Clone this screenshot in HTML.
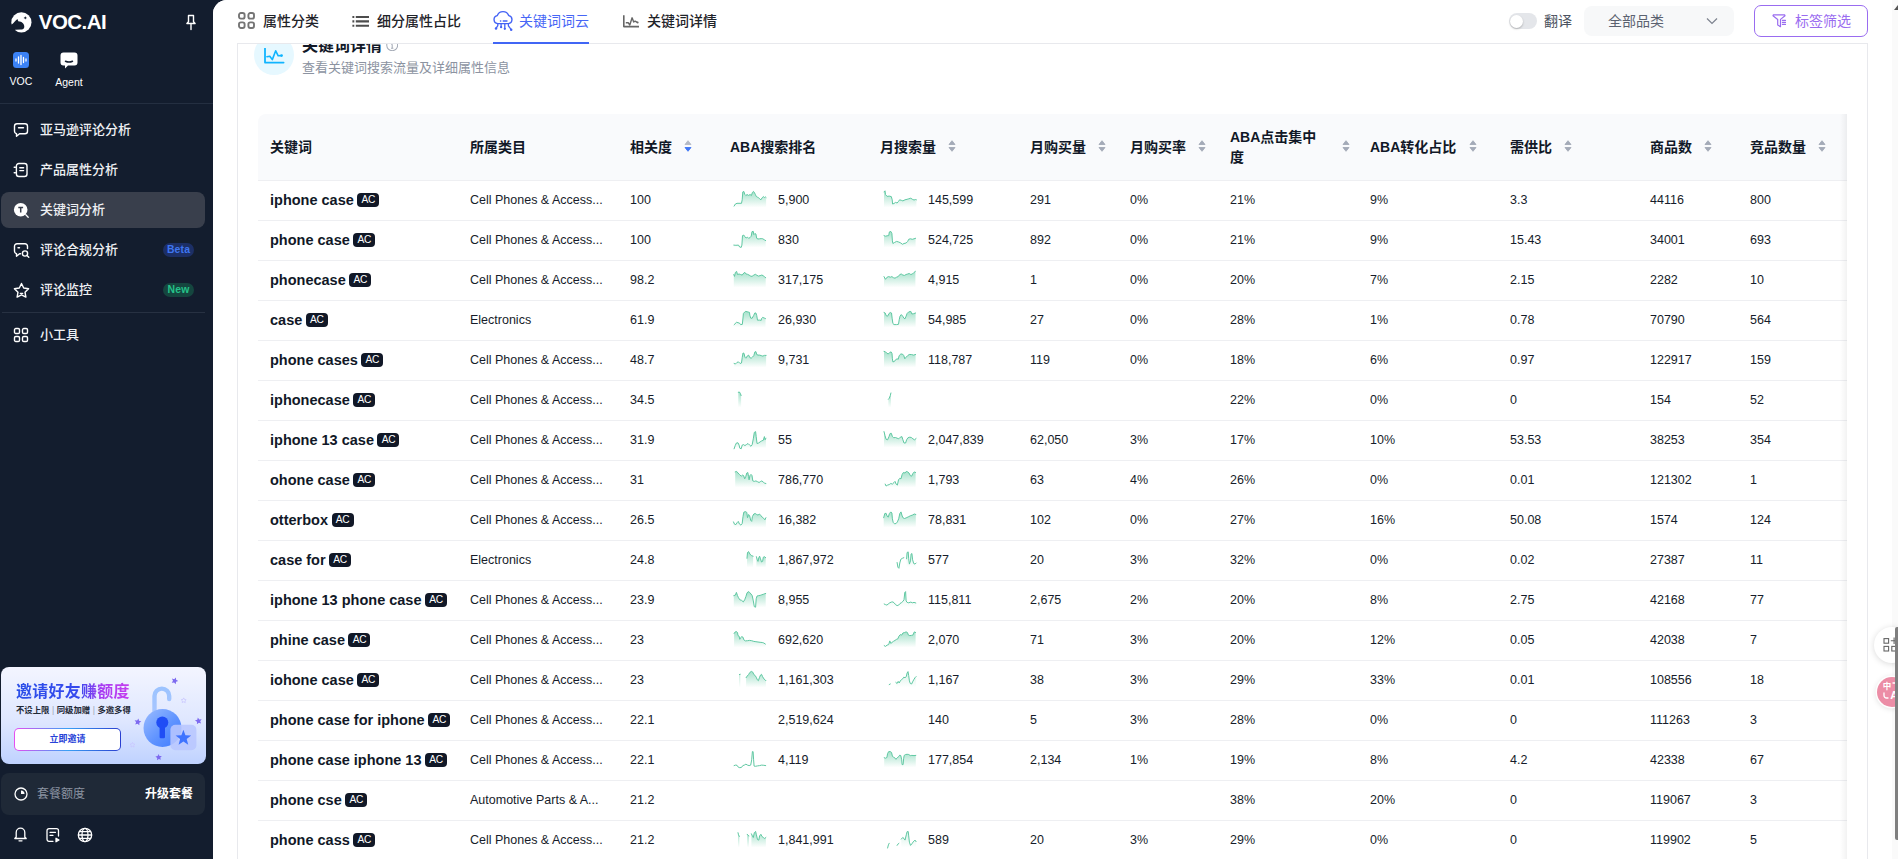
<!DOCTYPE html>
<html lang="zh-CN">
<head>
<meta charset="utf-8">
<title>VOC.AI - 关键词分析</title>
<style>
*{box-sizing:border-box;margin:0;padding:0}
html,body{width:1898px;height:859px;overflow:hidden;background:#131d2e}
body{font-family:"Liberation Sans","Noto Sans CJK SC",sans-serif;color:#1f2329;position:relative;font-size:12.5px}
svg{display:block}
/* ---------- sidebar ---------- */
#side{position:absolute;left:0;top:0;width:213px;height:859px;background:#131d2e;color:#fff}
#logo{position:absolute;left:10.8px;top:12px}
#brand{position:absolute;left:38.8px;top:10px;font-size:20.5px;font-weight:700;line-height:24px;letter-spacing:-.55px;color:#fff}
#pin{position:absolute;left:185px;top:14px}
.app{position:absolute;top:52px;text-align:center;font-size:10.5px;color:#fff;line-height:13px}
.app svg{margin:0 auto 7px}
#sdiv1{position:absolute;left:0;top:103px;width:213px;height:1px;background:#242f41}
.mi{position:absolute;left:1px;width:204px;height:36px;border-radius:8px;font-size:13px;font-weight:500;color:#eef0f3;line-height:36px;padding-left:39px;font-family:"Liberation Sans","Noto Sans CJK SC",sans-serif}
.mi svg{position:absolute;left:12px;top:10px}
.mi.on{background:#393f4c}
.tag{position:absolute;right:11px;top:11px;height:14px;width:31px;border-radius:7px;font-size:10.4px;line-height:14px;font-weight:700;text-align:center;padding:0;letter-spacing:.15px}
.tag.beta{background:#1c2f66;color:#3f76f0}
.tag.new{background:#15463f;color:#25c28a}
#sdiv2{position:absolute;left:2px;top:312px;width:203px;height:1px;background:#273142}
#promo{position:absolute;left:1px;top:667px;width:205px;height:97px;border-radius:8px;background:linear-gradient(180deg,#f3f5ff 0%,#dfe7ff 55%,#bfd2ff 100%);overflow:hidden}
#promo .t{position:absolute;left:15px;top:15px;font-size:16px;font-weight:700;line-height:20px;letter-spacing:.25px;background:linear-gradient(90deg,#2a4fe8 0%,#3549ee 55%,#a83df2 75%,#c63dee 100%);-webkit-background-clip:text;background-clip:text;color:transparent;white-space:nowrap}
#promo .s{position:absolute;left:15px;top:37px;font-size:8.4px;font-weight:700;line-height:12px;color:#1f2937;white-space:nowrap}
#promo .s em{font-style:normal;color:#9aa3b5;font-weight:400;padding:0 2.5px}
#promo .btn{position:absolute;left:13px;top:61px;width:107px;height:22.5px;border-radius:5px;background:linear-gradient(90deg,#e64df0,#3aa0f5 50%,#2a3fd0);padding:1px}
#promo .btn span{display:block;height:20.5px;border-radius:4px;background:#fff;color:#2743d8;font-size:9px;font-weight:700;line-height:20.5px;text-align:center}
#lock{position:absolute;left:127px;top:6px}
#quota{position:absolute;left:1px;top:773px;width:204px;height:42px;border-radius:8px;background:#1f2937}
#quota svg{position:absolute;left:13px;top:14px}
#quota .l{position:absolute;left:36px;top:13px;font-size:12px;line-height:16px;color:#8b93a1}
#quota .r{position:absolute;right:12px;top:13px;font-size:12px;line-height:16px;color:#fff;font-weight:700}
.bi{position:absolute;top:826px}
/* ---------- main ---------- */
#main{position:absolute;left:213px;top:0;width:1685px;height:859px;background:#fff;border-top-left-radius:14px;overflow:hidden}
#tabs{position:absolute;left:0;top:0;width:1679px;height:43px;background:#fff;z-index:5}
.tab{position:absolute;top:0;height:44px;font-size:14px;line-height:20px;color:#1f2329;white-space:nowrap;font-weight:500}
.tab svg{position:absolute;left:0;top:12px}
.tab span{position:absolute;top:11px}
.tab.on{color:#4766f6;font-weight:400}
.tab.on:after{content:"";position:absolute;left:0;right:0;top:42px;height:2px;background:#4166f5;z-index:6}
#sw{position:absolute;left:1295.5px;top:13px;width:28px;height:16px;border-radius:8px;background:#e4e6ea}
#sw:after{content:"";position:absolute;left:1.5px;top:1.5px;width:13px;height:13px;border-radius:7px;background:#fff;box-shadow:0 1px 2px rgba(0,0,0,.25)}
#swl{position:absolute;left:1331px;top:11px;font-size:14px;line-height:20px;color:#4b5260}
#sel{position:absolute;left:1371px;top:6px;width:150px;height:30px;border-radius:8px;background:#f7f8f9;font-size:14px;line-height:30px;color:#5b6270;padding-left:24px}
#sel svg{position:absolute;left:122px;top:11px}
#fbtn{position:absolute;left:1541px;top:5px;width:114px;height:32px;border:1px solid #9a6cf0;border-radius:7px;color:#9a6cf0;font-size:14px;line-height:30px;padding-left:40px;background:#fff}
#fbtn svg{position:absolute;left:17px;top:8px}
#card{position:absolute;left:24px;top:43px;width:1631px;height:900px;border:1px solid #e8e9ed;background:#fff;overflow:hidden}
#circ{position:absolute;left:16px;top:-9px;width:40px;height:40px;border-radius:20px;background:#e6f8ff}
#circ svg{position:absolute;left:10px;top:13px}
#ttl{position:absolute;left:64px;top:-8.8px;font-size:16px;font-weight:700;line-height:22px;color:#111827}
#info{position:absolute;left:147.8px;top:-5.3px}
#sub{position:absolute;left:64px;top:14.7px;font-size:13px;line-height:18px;color:#8c93a1}
/* table */
#tw{position:absolute;left:20px;top:70px;width:1589px;height:800px;overflow:hidden;border-top-left-radius:8px}
#tw:after{content:"";position:absolute;right:0;top:0;width:7px;height:100%;background:linear-gradient(90deg,rgba(0,0,0,0),rgba(0,0,0,.05));pointer-events:none}
table{border-collapse:collapse;table-layout:fixed;width:1600px}
th{height:66px;background:#f9fafc;text-align:left;padding:0 12px;font-size:14px;font-weight:700;color:#111827;border-bottom:1px solid #eeeff2;position:relative;line-height:20px;vertical-align:middle}
td{height:40px;padding:0 12px;border-bottom:1px solid #eeeff2;font-size:12.5px;color:#161c2a;white-space:nowrap;overflow:hidden;vertical-align:middle}
td.kw b{font-size:14.5px;font-weight:700;color:#111827;vertical-align:middle}
.ac{display:inline-block;font-style:normal;vertical-align:middle;margin-left:3.5px;width:22px;height:14px;border-radius:4px;background:#111827;color:#fff;font-size:10.2px;line-height:14px;text-align:center;letter-spacing:-.3px}
.spc .sp{display:inline-block;vertical-align:middle;width:40px;height:20px;margin:0 8px 0 0}
.spc span{vertical-align:middle}
.srt{position:absolute;top:26px;width:8px;height:12px}
.h2{display:inline-block;width:96px;vertical-align:middle;position:relative;top:.7px}
/* floating + scrollbar */
#sb{position:absolute;left:1679px;top:0;width:6px;height:859px;background:#fafafa}
#sbt{position:absolute;left:1682px;top:627px;width:3px;height:213px;border-radius:2px 0 0 2px;background:#7f7f7f;z-index:9}
.fl{position:absolute;left:1664px;width:30px;height:30px;border-radius:15px;background:#fff;box-shadow:0 1px 6px rgba(0,0,0,.15)}
.sp polyline{fill:none;stroke:#5fc8a2;stroke-width:1;stroke-linejoin:round;stroke-linecap:round}
</style>
</head>
<body>
<div id="side">
  <svg id="logo" width="22" height="22" viewBox="0 0 22 22"><circle cx="10.4" cy="10.4" r="10.1" fill="#fff"/><path d="M-1 12.7L0.7 12.5C2.5 11.6 4 8.4 6.4 6.9L7.3 9.3C8.5 9.7 9.5 9.5 10.4 9.9C12.6 11 13.6 13.5 13.2 15.5C12.9 17 11.5 17.5 10 17.6L4.3 17.7L2 19.5L-1 19.5Z" fill="#131d2e"/><path d="M14.3 4.2l.55 1.15 1.15.55-1.15.55-.55 1.15-.55-1.15-1.15-.55 1.15-.55z" fill="#131d2e"/></svg>
  <div id="brand">VOC.AI</div>
  <svg id="pin" width="12" height="17" viewBox="0 0 12 17"><path d="M3.5 1.5h5v6.2l1.6 1.8h-8.200l1.600-1.800z" fill="none" stroke="#fff" stroke-width="1.400" stroke-linejoin="round"/><path d="M6 9.500v6" stroke="#fff" stroke-width="1.400" stroke-linecap="round"/></svg>
  <div class="app" style="left:9px;width:24px"><svg width="16" height="16" viewBox="0 0 16 16"><rect width="16" height="16" rx="3.500" fill="#3b82f6"/><g stroke="#fff" stroke-width="1.300" stroke-linecap="round"><path d="M3 7v2M5.500 5v6M8 3.500v9M10.500 5.500v5M13 7v2"/></g></svg>VOC</div>
  <div class="app" style="left:53px;width:32px"><svg width="18" height="17" viewBox="0 0 18 17"><path d="M3.500 0.500h11a3 3 0 0 1 3 3v7a3 3 0 0 1-3 3H8l-3 3v-3H3.500a3 3 0 0 1-3-3v-7a3 3 0 0 1 3-3z" fill="#fff"/><path d="M5.500 9.200q3.500 1.600 7 0" stroke="#131d2e" stroke-width="1.500" fill="none" stroke-linecap="round"/></svg>Agent</div>
  <div id="sdiv1"></div>

  <div class="mi" style="top:112px"><svg width="16" height="16" viewBox="0 0 16 16" fill="none" stroke="#fff" stroke-width="1.400" stroke-linejoin="round" stroke-linecap="round"><path d="M4 1.700h8a2.500 2.500 0 0 1 2.500 2.500v5a2.500 2.500 0 0 1-2.500 2.500H6.500L3.500 14.300v-2.600A2.500 2.500 0 0 1 1.500 9.200v-5A2.500 2.500 0 0 1 4 1.700z"/><path d="M5.500 5.700h5"/></svg>亚马逊评论分析</div>
  <div class="mi" style="top:152px"><svg width="16" height="16" viewBox="0 0 16 16" fill="none" stroke="#fff" stroke-width="1.400" stroke-linejoin="round" stroke-linecap="round"><rect x="3.400" y="1.500" width="10.600" height="13" rx="2.500"/><path d="M6.800 5.800h3.800M6.800 8.600h3.800M1.200 5.200h1.200M1.200 10.800h1.200"/></svg>产品属性分析</div>
  <div class="mi on" style="top:192px"><svg width="17" height="17" viewBox="0 0 17 17"><circle cx="7.700" cy="7.700" r="6.800" fill="#fff"/><path d="M12.800 12.800l2.400 2.400" stroke="#fff" stroke-width="1.300" stroke-linecap="round"/><path d="M5.300 5.600h4.800M7.700 5.600v4.800" stroke="#393f4c" stroke-width="1.500" fill="none"/></svg>关键词分析</div>
  <div class="mi" style="top:232px"><svg width="17" height="17" viewBox="0 0 17 17" fill="none" stroke="#fff" stroke-width="1.400" stroke-linejoin="round" stroke-linecap="round"><path d="M14.500 6.500v-2.300a2.500 2.500 0 0 0-2.500-2.500H4a2.500 2.500 0 0 0-2.500 2.500v5A2.500 2.500 0 0 0 3.500 11.700v2.600l3-2.600h1"/><circle cx="12" cy="11.500" r="2.600"/><path d="M14 13.500l1.800 1.800"/><path d="M5 5.700h1.500"/></svg>评论合规分析<i class="tag beta" style="font-style:normal">Beta</i></div>
  <div class="mi" style="top:272px"><svg width="17" height="17" viewBox="0 0 17 17" fill="none" stroke="#fff" stroke-width="1.4" stroke-linejoin="round" stroke-linecap="round"><path d="M8.5 1.5l2.2 4.5 4.9.7-3.600 3.500.9 4.900-4.400-2.300-4.400 2.300.9-4.900L1.400 6.700l4.900-.7z"/><path d="M7.200 11.300h2.600" stroke-width="1.200"/></svg>评论监控<i class="tag new" style="font-style:normal">New</i></div>
  <div id="sdiv2"></div>
  <div class="mi" style="top:317px"><svg width="16" height="16" viewBox="0 0 16 16" fill="none" stroke="#fff" stroke-width="1.400"><rect x="1.500" y="1.500" width="5" height="5" rx="1.300"/><rect x="9.500" y="1.500" width="5" height="5" rx="1.300"/><rect x="1.500" y="9.500" width="5" height="5" rx="1.300"/><rect x="9.500" y="9.500" width="5" height="5" rx="1.300"/></svg>小工具</div>

  <div id="promo">
    <div class="t">邀请好友赚额度</div>
    <div class="s">不设上限<em>|</em>同级加赠<em>|</em>多邀多得</div>
    <div class="btn"><span>立即邀请</span></div>
    <svg id="lock" width="78" height="91" viewBox="0 0 78 91">
      <defs><linearGradient id="lk1" x1="0" y1="0" x2="1" y2="1"><stop offset="0" stop-color="#9bbcff"/><stop offset=".55" stop-color="#5f93ff"/><stop offset="1" stop-color="#3f7bff"/></linearGradient><linearGradient id="lk2" x1="0" y1="0" x2="0" y2="1"><stop offset="0" stop-color="#9cc3ff"/><stop offset="1" stop-color="#a9c6ff"/></linearGradient></defs>
      <path d="M26.5 42V22.95a7.35 7.35 0 0 1 14.7 0V26" fill="none" stroke="url(#lk2)" stroke-width="4.4" stroke-linecap="round"/>
      <circle cx="34.5" cy="55" r="19" fill="url(#lk1)"/>
      <circle cx="34.3" cy="49.6" r="6" fill="#1f4df5"/><rect x="31.6" y="50" width="5.4" height="15.2" rx="1.2" fill="#1f4df5"/>
      <rect x="42.4" y="51.7" width="26" height="25.5" rx="5" fill="#b8c6ff" opacity=".88"/>
      <polygon points="55.40,56.80 57.42,62.21 63.20,62.47 58.68,66.06 60.22,71.63 55.40,68.44 50.58,71.63 52.12,66.06 47.60,62.47 53.38,62.21" fill="#3f73ff"/>
      <g fill="#7d6af0"><polygon points="47.93,4.42 48.11,6.85 50.30,7.93 48.04,8.85 47.69,11.26 46.12,9.40 43.72,9.81 45.00,7.74 43.86,5.58 46.23,6.17"/><polygon points="69.87,44.45 71.25,46.47 73.68,46.31 72.18,48.24 73.09,50.50 70.80,49.67 68.92,51.24 69.00,48.80 66.94,47.50 69.28,46.82"/><polygon points="10.43,45.45 11.02,47.82 13.36,48.50 11.30,49.80 11.38,52.24 9.50,50.67 7.21,51.50 8.12,49.24 6.62,47.31 9.05,47.47"/><polygon points="30.40,80.91 31.52,82.93 33.83,82.97 32.26,84.66 32.93,86.87 30.84,85.89 28.95,87.21 29.23,84.93 27.39,83.54 29.65,83.09"/></g>
      <g fill="none" stroke="#c9c6ff" stroke-width=".8"><polygon points="55.70,24.90 56.46,26.45 58.17,26.70 56.94,27.90 57.23,29.60 55.70,28.80 54.17,29.60 54.46,27.90 53.23,26.70 54.94,26.45"/><polygon points="4.50,69.40 5.26,70.95 6.97,71.20 5.74,72.40 6.03,74.10 4.50,73.30 2.97,74.10 3.26,72.40 2.03,71.20 3.74,70.95"/></g>
    </svg>
  </div>
  <div id="quota">
    <svg width="14" height="14" viewBox="0 0 14 14" fill="none" stroke="#fff" stroke-width="1.300"><circle cx="7" cy="7" r="6"/><path d="M7 3.500V7h3.500A3.500 3.500 0 0 0 7 3.500z" fill="#fff" stroke="none"/></svg>
    <div class="l">套餐额度</div><div class="r">升级套餐</div>
  </div>
  <svg class="bi" style="left:13px" width="15" height="16" viewBox="0 0 15 16" fill="none" stroke="#fff" stroke-width="1.300" stroke-linecap="round" stroke-linejoin="round"><path d="M3.200 11V6.500a4.300 4.300 0 0 1 8.600 0V11l1.400 1.500H1.800z"/><path d="M6 14.800h3"/></svg>
  <svg class="bi" style="left:45px;top:827px" width="16" height="16" viewBox="0 0 16 16" fill="none" stroke="#fff" stroke-width="1.300" stroke-linecap="round" stroke-linejoin="round"><path d="M8 14.300H4a2 2 0 0 1-2-2v-8.600a2 2 0 0 1 2-2h7.500a2 2 0 0 1 2 2V9"/><path d="M5 5.300h5.500M5 8.300h3"/><path d="M11 11.300v3.500l3-1.750z" fill="#fff"/></svg>
  <svg class="bi" style="left:77px;top:827px" width="16" height="16" viewBox="0 0 16 16" fill="none" stroke="#fff" stroke-width="1.300"><circle cx="8" cy="8" r="6.700"/><ellipse cx="8" cy="8" rx="3" ry="6.700"/><path d="M1.300 8h13.400M2.300 4.700h11.400M2.300 11.300h11.400"/></svg>
</div>

<div id="main">
  <div id="tabs">
    <div class="tab" style="left:25px;width:82px"><svg width="17" height="17" viewBox="0 0 17 17" fill="none" stroke="#757575" stroke-width="1.9"><rect x="1" y="1" width="5.6" height="5.6" rx="1.9"/><rect x="10.4" y="1" width="5.6" height="5.6" rx="1.9"/><rect x="1" y="10.4" width="5.6" height="5.6" rx="1.9"/><rect x="10.4" y="10.4" width="5.6" height="5.6" rx="1.9"/></svg><span style="left:25px">属性分类</span></div>
    <div class="tab" style="left:139px;width:110px"><svg width="17" height="17" viewBox="0 0 17 17" fill="none" stroke="#4d4d4d" stroke-width="2.1"><path d="M3.8 5h13.2M3.8 9.4h13.2M3.8 13.8h13.2"/><path d="M.4 5h1.9M.4 9.4h1.9M.4 13.8h1.9"/></svg><span style="left:25px">细分属性占比</span></div>
    <div class="tab on" style="left:280px;width:96px"><svg width="21" height="22" viewBox="0 0 21 22" fill="none" stroke="#4463f5" stroke-width="1.4" stroke-linecap="round" stroke-linejoin="round" style="top:10px"><path d="M4.700 13.600A4.050 4.050 0 0 1 4.300 5.600A6.100 6.100 0 0 1 15.700 5.600A4.050 4.050 0 0 1 15.300 13.600Z"/><path d="M7.400 11h.4M10.200 11h3.800" stroke-width="1.300"/><path d="M4.800 13.800v1.800l-1.600 2.600M8.100 13.800v3M11.800 13.800v4.700M15.400 13.800v2l2.600 3.600" stroke-width="1.300"/><g fill="#4463f5" stroke="none"><circle cx="3" cy="18.400" r="1.250"/><circle cx="8.100" cy="17.200" r="1.150"/><circle cx="11.800" cy="18.800" r="1.150"/><circle cx="18.200" cy="19.700" r="1.250"/></g></svg><span style="left:26px">关键词词云</span></div>
    <div class="tab" style="left:409px;width:96px"><svg width="18" height="17" viewBox="0 0 18 17" fill="none" stroke="#666" stroke-width="1.6" stroke-linejoin="round"><path d="M1.8 3.3v11.3h15.2"/><path d="M3.8 10.8h2.6l1.4 2.2 2.3-7.2 1.6 4.2 1.4-.9 2.2 1.3" stroke-width="1.4"/><circle cx="15.6" cy="10.4" r="1" fill="#666" stroke="none"/></svg><span style="left:25px">关键词详情</span></div>
    <div id="sw"></div><div id="swl">翻译</div>
    <div id="sel">全部品类<svg width="12" height="8" viewBox="0 0 12 8" fill="none" stroke="#7d838f" stroke-width="1.200"><path d="M1 1.500l5 5 5-5"/></svg></div>
    <div id="fbtn"><svg width="16" height="16" viewBox="0 0 16 16" fill="none" stroke="#9a6cf0" stroke-width="1.2" stroke-linejoin="round" stroke-linecap="round"><path d="M1.300 0.900H12.700L13 1.800L8.500 5.400V12.700L5.700 11.100V5.400L1 1.800Z"/><path d="M10.400 6.400h3.100M10.400 8.400h3.100M10.400 10.400h3.100" stroke-width="1.100"/></svg>标签筛选</div>
  </div>

  <div id="card">
    <div id="circ"><svg width="21" height="16" viewBox="0 0 21 16" fill="none" stroke="#10b4ff" stroke-width="1.800" stroke-linejoin="round" stroke-linecap="round"><path d="M1 0.500v14.100h18.600"/><path d="M2.900 8.700l2.900-.5 2.500 3.400 3.400-8.800 2.500 5 3 -.2" stroke-width="1.600"/><circle cx="17.600" cy="7.600" r="1.300" fill="#10b4ff" stroke="none"/></svg></div>
    <div id="ttl">关键词详情</div>
    <svg id="info" width="12.400" height="12.400" viewBox="0 0 13 13" fill="none" stroke="#a3a9b5" stroke-width="1.050"><circle cx="6.500" cy="6.500" r="5.700"/><path d="M6.500 5.600v3.900M5.300 9.600h2.400M5.600 5.700h.9M6.500 3.300v1.100"/></svg>
    <div id="sub">查看关键词搜索流量及详细属性信息</div>

    <div id="tw">
      <svg width="0" height="0" style="position:absolute"><defs><linearGradient id="gg" x1="0" y1="0" x2="0" y2="1"><stop offset="0" stop-color="#5cc9a0" stop-opacity=".55"/><stop offset="1" stop-color="#5cc9a0" stop-opacity="0"/></linearGradient><linearGradient id="gl" x1="0" y1="0" x2="0" y2="1"><stop offset="0" stop-color="#5cc9a0" stop-opacity=".25"/><stop offset="1" stop-color="#5cc9a0" stop-opacity="0"/></linearGradient>
      <g id="so"><path d="M4 .7l3 3.800H1z" fill="#a4aab8" stroke="#a4aab8" stroke-width=".900" stroke-linejoin="round"/><path d="M4 11.300l3-3.800H1z" fill="#a4aab8" stroke="#a4aab8" stroke-width=".900" stroke-linejoin="round"/></g>
      <g id="sod"><path d="M4 .700l3 3.800H1z" fill="#b4b9c5" stroke="#b4b9c5" stroke-width=".900" stroke-linejoin="round"/><path d="M4 11.300l3-3.800H1z" fill="#3f76f5" stroke="#3f76f5" stroke-width=".900" stroke-linejoin="round"/></g></defs></svg>
      <table>
        <colgroup><col style="width:200px"><col style="width:160px"><col style="width:100px"><col style="width:150px"><col style="width:150px"><col style="width:100px"><col style="width:100px"><col style="width:140px"><col style="width:140px"><col style="width:140px"><col style="width:100px"><col style="width:120px"></colgroup>
        <thead><tr>
          <th>关键词</th>
          <th>所属类目</th>
          <th>相关度<svg class="srt" style="left:66px" viewBox="0 0 8 12"><use href="#sod"/></svg></th>
          <th>ABA搜索排名</th>
          <th>月搜索量<svg class="srt" style="left:80px" viewBox="0 0 8 12"><use href="#so"/></svg></th>
          <th>月购买量<svg class="srt" style="left:80px" viewBox="0 0 8 12"><use href="#so"/></svg></th>
          <th>月购买率<svg class="srt" style="left:80px" viewBox="0 0 8 12"><use href="#so"/></svg></th>
          <th><span class="h2">ABA点击集中度</span><svg class="srt" style="left:124px" viewBox="0 0 8 12"><use href="#so"/></svg></th>
          <th>ABA转化占比<svg class="srt" style="left:111px" viewBox="0 0 8 12"><use href="#so"/></svg></th>
          <th>需供比<svg class="srt" style="left:66px" viewBox="0 0 8 12"><use href="#so"/></svg></th>
          <th>商品数<svg class="srt" style="left:66px" viewBox="0 0 8 12"><use href="#so"/></svg></th>
          <th>竞品数量<svg class="srt" style="left:80px" viewBox="0 0 8 12"><use href="#so"/></svg></th>
        </tr></thead>
        <tbody>
<tr><td class="kw"><b>iphone case</b><i class="ac">AC</i></td><td>Cell Phones &amp; Access...</td><td>100</td><td class="spc"><svg class="sp" width="40" height="20" viewBox="0 0 40 20"><polygon fill="url(#gg)" points="4.1,16.1 5.4,14.0 7.0,13.3 11.5,13.3 12.2,9.8 12.8,1.9 13.8,1.4 14.9,4.5 15.9,5.6 17.0,4.5 18.6,5.4 20.1,4.5 21.4,5.6 22.4,2.4 23.5,1.4 24.6,3.0 25.4,4.5 26.2,6.4 27.5,7.2 28.6,7.7 29.6,8.8 30.9,9.8 32.2,7.7 33.3,6.6 34.4,7.5 35.4,6.9 36.1,7.5 36.1,17.5 4.1,17.5"/><polyline points="4.1,16.1 5.4,14.0 7.0,13.3 11.5,13.3 12.2,9.8 12.8,1.9 13.8,1.4 14.9,4.5 15.9,5.6 17.0,4.5 18.6,5.4 20.1,4.5 21.4,5.6 22.4,2.4 23.5,1.4 24.6,3.0 25.4,4.5 26.2,6.4 27.5,7.2 28.6,7.7 29.6,8.8 30.9,9.8 32.2,7.7 33.3,6.6 34.4,7.5 35.4,6.9 36.1,7.5"/></svg><span>5,900</span></td><td class="spc"><svg class="sp" width="40" height="20" viewBox="0 0 40 20"><polygon fill="url(#gg)" points="4.0,1.9 5.0,0.8 5.5,4.5 7.1,6.4 9.2,6.1 11.3,6.6 12.2,9.8 12.6,14.0 14.0,13.5 15.5,12.4 17.1,13.0 18.5,11.4 19.6,9.8 21.3,10.3 22.9,10.9 25.0,9.8 27.1,9.3 28.7,8.8 30.8,8.2 32.4,9.3 34.0,10.0 35.6,9.5 36.4,9.8 36.4,17.5 4.0,17.5"/><polyline points="4.0,1.9 5.0,0.8 5.5,4.5 7.1,6.4 9.2,6.1 11.3,6.6 12.2,9.8 12.6,14.0 14.0,13.5 15.5,12.4 17.1,13.0 18.5,11.4 19.6,9.8 21.3,10.3 22.9,10.9 25.0,9.8 27.1,9.3 28.7,8.8 30.8,8.2 32.4,9.3 34.0,10.0 35.6,9.5 36.4,9.8"/></svg><span>145,599</span></td><td>291</td><td>0%</td><td>21%</td><td>9%</td><td>3.3</td><td>44116</td><td>800</td></tr>
<tr><td class="kw"><b>phone case</b><i class="ac">AC</i></td><td>Cell Phones &amp; Access...</td><td>100</td><td class="spc"><svg class="sp" width="40" height="20" viewBox="0 0 40 20"><polygon fill="url(#gg)" points="3.8,15.1 5.9,15.3 8.5,15.1 9.6,17.0 11.2,17.4 11.9,15.1 12.5,5.6 13.8,5.1 14.9,6.7 16.1,8.0 17.5,7.2 18.6,8.3 19.9,7.7 21.2,6.2 22.0,1.6 23.3,1.4 23.8,4.6 24.9,3.5 25.9,4.0 26.7,8.3 28.0,9.0 29.6,8.8 31.2,8.6 32.8,8.8 34.4,9.8 35.7,10.6 35.7,17.5 3.8,17.5"/><polyline points="3.8,15.1 5.9,15.3 8.5,15.1 9.6,17.0 11.2,17.4 11.9,15.1 12.5,5.6 13.8,5.1 14.9,6.7 16.1,8.0 17.5,7.2 18.6,8.3 19.9,7.7 21.2,6.2 22.0,1.6 23.3,1.4 23.8,4.6 24.9,3.5 25.9,4.0 26.7,8.3 28.0,9.0 29.6,8.8 31.2,8.6 32.8,8.8 34.4,9.8 35.7,10.6"/></svg><span>830</span></td><td class="spc"><svg class="sp" width="40" height="20" viewBox="0 0 40 20"><polygon fill="url(#gg)" points="4.0,5.6 5.5,6.2 7.1,5.8 8.7,5.6 9.4,1.9 10.8,1.4 11.9,3.5 12.4,10.9 12.9,13.5 14.5,12.5 16.6,11.4 18.7,12.0 20.8,13.0 22.4,14.3 24.0,13.5 26.1,13.0 27.7,11.4 28.7,9.3 30.3,8.8 32.4,9.3 34.0,8.8 35.6,8.3 35.6,17.5 4.0,17.5"/><polyline points="4.0,5.6 5.5,6.2 7.1,5.8 8.7,5.6 9.4,1.9 10.8,1.4 11.9,3.5 12.4,10.9 12.9,13.5 14.5,12.5 16.6,11.4 18.7,12.0 20.8,13.0 22.4,14.3 24.0,13.5 26.1,13.0 27.7,11.4 28.7,9.3 30.3,8.8 32.4,9.3 34.0,8.8 35.6,8.3"/></svg><span>524,725</span></td><td>892</td><td>0%</td><td>21%</td><td>9%</td><td>15.43</td><td>34001</td><td>693</td></tr>
<tr><td class="kw"><b>phonecase</b><i class="ac">AC</i></td><td>Cell Phones &amp; Access...</td><td>98.2</td><td class="spc"><svg class="sp" width="40" height="20" viewBox="0 0 40 20"><polygon fill="url(#gg)" points="3.8,4.5 4.5,6.4 5.4,2.4 6.6,1.4 7.5,4.5 9.1,4.0 10.6,4.5 12.2,5.1 13.8,3.0 14.9,2.4 16.1,4.0 17.5,4.3 19.1,5.1 20.7,6.1 22.0,6.4 23.8,5.1 25.4,4.3 27.0,5.4 28.6,6.1 30.1,5.6 31.7,5.1 33.3,5.6 34.7,7.2 35.7,7.7 35.7,17.5 3.8,17.5"/><polyline points="3.8,4.5 4.5,6.4 5.4,2.4 6.6,1.4 7.5,4.5 9.1,4.0 10.6,4.5 12.2,5.1 13.8,3.0 14.9,2.4 16.1,4.0 17.5,4.3 19.1,5.1 20.7,6.1 22.0,6.4 23.8,5.1 25.4,4.3 27.0,5.4 28.6,6.1 30.1,5.6 31.7,5.1 33.3,5.6 34.7,7.2 35.7,7.7"/></svg><span>317,175</span></td><td class="spc"><svg class="sp" width="40" height="20" viewBox="0 0 40 20"><polygon fill="url(#gg)" points="4.0,6.6 5.5,9.3 7.1,7.2 8.7,6.6 10.3,7.2 11.9,6.6 13.4,7.7 15.0,8.2 16.6,7.2 18.2,6.6 19.8,4.5 21.3,4.0 22.9,5.1 24.5,5.4 26.1,4.5 27.7,4.0 29.2,3.5 30.8,4.5 32.4,4.0 34.0,2.4 35.4,1.4 35.4,17.5 4.0,17.5"/><polyline points="4.0,6.6 5.5,9.3 7.1,7.2 8.7,6.6 10.3,7.2 11.9,6.6 13.4,7.7 15.0,8.2 16.6,7.2 18.2,6.6 19.8,4.5 21.3,4.0 22.9,5.1 24.5,5.4 26.1,4.5 27.7,4.0 29.2,3.5 30.8,4.5 32.4,4.0 34.0,2.4 35.4,1.4"/></svg><span>4,915</span></td><td>1</td><td>0%</td><td>20%</td><td>7%</td><td>2.15</td><td>2282</td><td>10</td></tr>
<tr><td class="kw"><b>case</b><i class="ac">AC</i></td><td>Electronics</td><td>61.9</td><td class="spc"><svg class="sp" width="40" height="20" viewBox="0 0 40 20"><polygon fill="url(#gg)" points="4.1,14.7 6.5,12.3 9.5,13.1 10.5,14.6 12.3,14.4 12.9,9.0 13.4,3.5 14.8,1.9 15.8,1.4 19.5,2.4 19.8,5.1 20.7,8.1 22.1,8.3 23.7,5.4 24.9,2.9 25.9,3.0 26.7,5.4 27.5,10.2 29.4,10.1 31.2,10.4 31.5,8.6 32.6,7.4 34.4,8.1 35.5,8.6 35.5,17.5 4.1,17.5"/><polyline points="4.1,14.7 6.5,12.3 9.5,13.1 10.5,14.6 12.3,14.4 12.9,9.0 13.4,3.5 14.8,1.9 15.8,1.4 19.5,2.4 19.8,5.1 20.7,8.1 22.1,8.3 23.7,5.4 24.9,2.9 25.9,3.0 26.7,5.4 27.5,10.2 29.4,10.1 31.2,10.4 31.5,8.6 32.6,7.4 34.4,8.1 35.5,8.6"/></svg><span>26,930</span></td><td class="spc"><svg class="sp" width="40" height="20" viewBox="0 0 40 20"><polygon fill="url(#gg)" points="4.0,2.5 5.2,3.0 6.1,5.6 7.6,6.2 9.0,3.5 10.3,2.5 11.5,3.0 12.2,8.8 12.9,13.5 14.0,14.6 16.6,14.6 18.5,14.3 19.2,9.8 20.0,6.2 21.3,4.6 22.7,6.2 24.0,8.3 25.0,8.8 26.1,6.2 27.1,3.5 28.7,1.9 30.8,1.4 31.9,4.0 33.5,3.7 35.6,3.0 35.6,17.5 4.0,17.5"/><polyline points="4.0,2.5 5.2,3.0 6.1,5.6 7.6,6.2 9.0,3.5 10.3,2.5 11.5,3.0 12.2,8.8 12.9,13.5 14.0,14.6 16.6,14.6 18.5,14.3 19.2,9.8 20.0,6.2 21.3,4.6 22.7,6.2 24.0,8.3 25.0,8.8 26.1,6.2 27.1,3.5 28.7,1.9 30.8,1.4 31.9,4.0 33.5,3.7 35.6,3.0"/></svg><span>54,985</span></td><td>27</td><td>0%</td><td>28%</td><td>1%</td><td>0.78</td><td>70790</td><td>564</td></tr>
<tr><td class="kw"><b>phone cases</b><i class="ac">AC</i></td><td>Cell Phones &amp; Access...</td><td>48.7</td><td class="spc"><svg class="sp" width="40" height="20" viewBox="0 0 40 20"><polygon fill="url(#gg)" points="4.1,13.5 5.4,14.0 7.0,12.4 8.5,11.9 10.1,13.5 11.5,13.0 12.2,7.7 13.0,3.0 14.0,3.3 14.9,7.2 15.9,8.2 17.2,6.1 18.6,5.1 19.9,7.7 21.2,8.2 22.4,7.2 23.8,5.6 24.9,1.9 25.9,1.6 26.7,4.5 28.0,5.1 29.6,5.1 31.2,5.6 32.8,6.1 34.4,5.4 36.1,5.4 36.1,17.5 4.1,17.5"/><polyline points="4.1,13.5 5.4,14.0 7.0,12.4 8.5,11.9 10.1,13.5 11.5,13.0 12.2,7.7 13.0,3.0 14.0,3.3 14.9,7.2 15.9,8.2 17.2,6.1 18.6,5.1 19.9,7.7 21.2,8.2 22.4,7.2 23.8,5.6 24.9,1.9 25.9,1.6 26.7,4.5 28.0,5.1 29.6,5.1 31.2,5.6 32.8,6.1 34.4,5.4 36.1,5.4"/></svg><span>9,731</span></td><td class="spc"><svg class="sp" width="40" height="20" viewBox="0 0 40 20"><polygon fill="url(#gg)" points="4.0,1.4 5.2,1.6 6.6,3.0 8.2,4.0 9.8,2.4 11.1,1.9 12.0,3.5 12.4,8.8 12.9,11.9 14.5,11.4 15.5,9.8 17.1,8.8 18.2,9.3 19.2,5.6 20.8,4.0 22.4,4.0 23.8,5.6 24.8,8.8 26.1,7.2 27.7,5.6 29.2,4.5 31.4,4.5 33.5,5.1 35.6,4.5 35.6,17.5 4.0,17.5"/><polyline points="4.0,1.4 5.2,1.6 6.6,3.0 8.2,4.0 9.8,2.4 11.1,1.9 12.0,3.5 12.4,8.8 12.9,11.9 14.5,11.4 15.5,9.8 17.1,8.8 18.2,9.3 19.2,5.6 20.8,4.0 22.4,4.0 23.8,5.6 24.8,8.8 26.1,7.2 27.7,5.6 29.2,4.5 31.4,4.5 33.5,5.1 35.6,4.5"/></svg><span>118,787</span></td><td>119</td><td>0%</td><td>18%</td><td>6%</td><td>0.97</td><td>122917</td><td>159</td></tr>
<tr><td class="kw"><b>iphonecase</b><i class="ac">AC</i></td><td>Cell Phones &amp; Access...</td><td>34.5</td><td class="spc"><svg class="sp" width="40" height="20" viewBox="0 0 40 20"><polygon fill="url(#gg)" points="8.3,2.3 9.4,2.0 10.4,3.5 11.1,5.6 11.1,17.5 8.3,17.5"/><polyline points="8.3,2.3 9.4,2.0 10.4,3.5 11.1,5.6"/></svg><span></span></td><td class="spc"><svg class="sp" width="40" height="20" viewBox="0 0 40 20"><polygon fill="url(#gg)" points="8.4,9.3 9.2,8.3 10.3,5.6 10.9,3.0 10.9,17.5 8.4,17.5"/><polyline points="8.4,9.3 9.2,8.3 10.3,5.6 10.9,3.0"/></svg><span></span></td><td></td><td></td><td>22%</td><td>0%</td><td>0</td><td>154</td><td>52</td></tr>
<tr><td class="kw"><b>iphone 13 case</b><i class="ac">AC</i></td><td>Cell Phones &amp; Access...</td><td>31.9</td><td class="spc"><svg class="sp" width="40" height="20" viewBox="0 0 40 20"><polygon fill="url(#gg)" points="4.1,18.8 5.2,15.6 6.4,13.0 8.0,12.8 9.1,15.1 9.8,18.2 11.2,18.8 12.2,15.1 13.6,14.6 14.9,15.6 16.4,14.6 18.0,13.5 19.6,15.1 21.0,16.3 22.2,14.6 23.3,8.8 24.3,2.4 25.6,1.6 26.2,6.6 27.0,13.5 28.6,13.0 30.1,11.9 31.7,10.9 33.3,10.3 34.4,6.6 35.1,9.8 35.9,8.2 35.9,17.5 4.1,17.5"/><polyline points="4.1,18.8 5.2,15.6 6.4,13.0 8.0,12.8 9.1,15.1 9.8,18.2 11.2,18.8 12.2,15.1 13.6,14.6 14.9,15.6 16.4,14.6 18.0,13.5 19.6,15.1 21.0,16.3 22.2,14.6 23.3,8.8 24.3,2.4 25.6,1.6 26.2,6.6 27.0,13.5 28.6,13.0 30.1,11.9 31.7,10.9 33.3,10.3 34.4,6.6 35.1,9.8 35.9,8.2"/></svg><span>55</span></td><td class="spc"><svg class="sp" width="40" height="20" viewBox="0 0 40 20"><polygon fill="url(#gg)" points="4.0,1.6 5.0,5.6 6.1,9.3 7.6,9.8 9.0,6.6 10.1,3.5 11.3,3.3 12.4,6.6 13.7,7.7 15.5,7.5 17.1,8.2 18.7,8.8 20.3,7.2 21.9,6.6 22.9,9.8 24.0,13.0 25.6,13.0 26.6,9.8 28.0,7.7 29.8,7.2 31.4,7.5 32.9,8.8 34.5,9.8 36.1,8.5 36.1,17.5 4.0,17.5"/><polyline points="4.0,1.6 5.0,5.6 6.1,9.3 7.6,9.8 9.0,6.6 10.1,3.5 11.3,3.3 12.4,6.6 13.7,7.7 15.5,7.5 17.1,8.2 18.7,8.8 20.3,7.2 21.9,6.6 22.9,9.8 24.0,13.0 25.6,13.0 26.6,9.8 28.0,7.7 29.8,7.2 31.4,7.5 32.9,8.8 34.5,9.8 36.1,8.5"/></svg><span>2,047,839</span></td><td>62,050</td><td>3%</td><td>17%</td><td>10%</td><td>53.53</td><td>38253</td><td>354</td></tr>
<tr><td class="kw"><b>ohone case</b><i class="ac">AC</i></td><td>Cell Phones &amp; Access...</td><td>31</td><td class="spc"><svg class="sp" width="40" height="20" viewBox="0 0 40 20"><polygon fill="url(#gg)" points="5.2,1.9 6.6,1.4 8.0,3.0 9.6,4.6 11.2,6.2 12.5,5.1 13.6,5.6 14.7,8.8 15.7,6.7 16.8,3.0 17.8,2.5 18.6,6.7 19.1,9.8 19.9,5.6 21.0,4.4 22.0,5.6 22.8,10.9 24.3,11.4 25.9,10.9 27.5,11.7 29.1,12.5 30.7,11.4 31.9,10.9 33.3,12.2 34.7,13.2 35.9,13.5 35.9,17.5 5.2,17.5"/><polyline points="5.2,1.9 6.6,1.4 8.0,3.0 9.6,4.6 11.2,6.2 12.5,5.1 13.6,5.6 14.7,8.8 15.7,6.7 16.8,3.0 17.8,2.5 18.6,6.7 19.1,9.8 19.9,5.6 21.0,4.4 22.0,5.6 22.8,10.9 24.3,11.4 25.9,10.9 27.5,11.7 29.1,12.5 30.7,11.4 31.9,10.9 33.3,12.2 34.7,13.2 35.9,13.5"/></svg><span>786,770</span></td><td class="spc"><svg class="sp" width="40" height="20" viewBox="0 0 40 20"><polygon fill="url(#gg)" points="5.2,14.1 6.1,16.0 7.6,15.1 9.2,14.6 10.8,13.5 12.4,14.1 14.0,12.5 15.0,11.4 16.1,14.1 17.4,15.1 18.5,9.8 19.8,8.3 21.0,8.8 22.1,4.6 23.4,2.5 25.0,3.0 26.3,1.4 27.7,1.9 29.0,3.0 30.3,5.6 31.6,6.2 32.9,3.5 34.3,1.9 35.6,2.5 35.6,17.5 5.2,17.5"/><polyline points="5.2,14.1 6.1,16.0 7.6,15.1 9.2,14.6 10.8,13.5 12.4,14.1 14.0,12.5 15.0,11.4 16.1,14.1 17.4,15.1 18.5,9.8 19.8,8.3 21.0,8.8 22.1,4.6 23.4,2.5 25.0,3.0 26.3,1.4 27.7,1.9 29.0,3.0 30.3,5.6 31.6,6.2 32.9,3.5 34.3,1.9 35.6,2.5"/></svg><span>1,793</span></td><td>63</td><td>4%</td><td>26%</td><td>0%</td><td>0.01</td><td>121302</td><td>1</td></tr>
<tr><td class="kw"><b>otterbox</b><i class="ac">AC</i></td><td>Cell Phones &amp; Access...</td><td>26.5</td><td class="spc"><svg class="sp" width="40" height="20" viewBox="0 0 40 20"><polygon fill="url(#gg)" points="3.5,11.9 4.5,14.2 5.9,14.6 7.3,12.4 8.3,11.4 9.4,14.0 10.9,15.1 12.2,13.5 13.0,6.6 13.8,2.2 15.4,1.6 16.8,2.4 17.5,7.7 18.6,4.5 19.6,5.6 20.7,10.3 21.7,11.4 22.4,6.6 23.8,4.0 25.2,3.5 26.7,4.5 28.0,5.1 29.4,4.0 30.9,5.6 32.2,7.2 33.6,8.2 34.9,9.8 35.9,7.7 35.9,17.5 3.5,17.5"/><polyline points="3.5,11.9 4.5,14.2 5.9,14.6 7.3,12.4 8.3,11.4 9.4,14.0 10.9,15.1 12.2,13.5 13.0,6.6 13.8,2.2 15.4,1.6 16.8,2.4 17.5,7.7 18.6,4.5 19.6,5.6 20.7,10.3 21.7,11.4 22.4,6.6 23.8,4.0 25.2,3.5 26.7,4.5 28.0,5.1 29.4,4.0 30.9,5.6 32.2,7.2 33.6,8.2 34.9,9.8 35.9,7.7"/></svg><span>16,382</span></td><td class="spc"><svg class="sp" width="40" height="20" viewBox="0 0 40 20"><polygon fill="url(#gg)" points="3.7,7.7 4.8,3.5 6.1,3.3 7.1,6.1 8.2,7.2 9.4,3.5 10.8,1.9 11.9,3.0 12.4,8.8 13.2,12.4 14.5,13.8 16.1,13.5 17.4,11.9 18.7,8.8 19.8,3.5 21.0,1.9 21.9,5.1 22.9,7.7 24.5,8.5 26.1,7.9 28.2,6.9 30.3,5.8 32.4,5.1 34.3,4.0 35.8,4.5 35.8,17.5 3.7,17.5"/><polyline points="3.7,7.7 4.8,3.5 6.1,3.3 7.1,6.1 8.2,7.2 9.4,3.5 10.8,1.9 11.9,3.0 12.4,8.8 13.2,12.4 14.5,13.8 16.1,13.5 17.4,11.9 18.7,8.8 19.8,3.5 21.0,1.9 21.9,5.1 22.9,7.7 24.5,8.5 26.1,7.9 28.2,6.9 30.3,5.8 32.4,5.1 34.3,4.0 35.8,4.5"/></svg><span>78,831</span></td><td>102</td><td>0%</td><td>27%</td><td>16%</td><td>50.08</td><td>1574</td><td>124</td></tr>
<tr><td class="kw"><b>case for</b><i class="ac">AC</i></td><td>Electronics</td><td>24.8</td><td class="spc"><svg class="sp" width="40" height="20" viewBox="0 0 40 20"><polygon fill="url(#gg)" points="17.0,8.3 17.5,2.5 18.6,1.6 19.9,4.0 21.4,5.6 23.1,6.2 23.1,17.5 17.0,17.5"/><polyline points="17.0,8.3 17.5,2.5 18.6,1.6 19.9,4.0 21.4,5.6 23.1,6.2"/><polygon fill="url(#gg)" points="26.4,6.7 27.3,9.8 28.0,11.4 28.8,7.7 29.6,6.2 30.5,8.8 31.5,12.0 32.6,11.4 33.3,7.2 34.4,6.7 35.7,7.7 35.7,17.5 26.4,17.5"/><polyline points="26.4,6.7 27.3,9.8 28.0,11.4 28.8,7.7 29.6,6.2 30.5,8.8 31.5,12.0 32.6,11.4 33.3,7.2 34.4,6.7 35.7,7.7"/></svg><span>1,867,972</span></td><td class="spc"><svg class="sp" width="40" height="20" viewBox="0 0 40 20"><polyline points="17.1,12.5 17.9,17.2 18.9,18.3 19.8,13.0 20.8,9.3 22.4,8.3 23.8,7.7"/><polygon fill="url(#gl)" points="26.6,8.8 27.1,2.5 28.2,1.9 28.7,8.8 29.4,14.1 30.5,10.9 31.1,4.0 31.9,3.5 32.6,9.8 33.7,13.5 35.0,14.1 36.1,13.0 36.1,17.5 26.6,17.5"/><polyline points="26.6,8.8 27.1,2.5 28.2,1.9 28.7,8.8 29.4,14.1 30.5,10.9 31.1,4.0 31.9,3.5 32.6,9.8 33.7,13.5 35.0,14.1 36.1,13.0"/></svg><span>577</span></td><td>20</td><td>3%</td><td>32%</td><td>0%</td><td>0.02</td><td>27387</td><td>11</td></tr>
<tr><td class="kw"><b>iphone 13 phone case</b><i class="ac">AC</i></td><td>Cell Phones &amp; Access...</td><td>23.9</td><td class="spc"><svg class="sp" width="40" height="20" viewBox="0 0 40 20"><polygon fill="url(#gg)" points="3.8,5.6 5.4,5.1 6.4,2.4 7.5,5.6 8.5,7.7 9.8,9.8 11.5,10.3 13.3,11.9 14.7,9.8 15.9,6.6 17.0,3.0 18.2,1.6 19.6,2.4 21.0,4.0 22.2,5.6 23.3,10.9 24.3,16.7 25.6,17.2 26.2,8.8 27.0,6.1 28.6,5.6 30.1,5.4 31.7,4.8 33.3,4.3 34.7,3.7 35.7,3.5 35.7,17.5 3.8,17.5"/><polyline points="3.8,5.6 5.4,5.1 6.4,2.4 7.5,5.6 8.5,7.7 9.8,9.8 11.5,10.3 13.3,11.9 14.7,9.8 15.9,6.6 17.0,3.0 18.2,1.6 19.6,2.4 21.0,4.0 22.2,5.6 23.3,10.9 24.3,16.7 25.6,17.2 26.2,8.8 27.0,6.1 28.6,5.6 30.1,5.4 31.7,4.8 33.3,4.3 34.7,3.7 35.7,3.5"/></svg><span>8,955</span></td><td class="spc"><svg class="sp" width="40" height="20" viewBox="0 0 40 20"><polygon fill="url(#gl)" points="4.2,14.0 5.5,14.6 6.9,15.1 8.2,14.0 9.8,12.8 11.3,12.1 12.9,11.9 14.3,13.0 15.5,14.6 17.1,15.6 18.7,15.1 20.0,13.5 21.3,12.8 22.9,11.4 24.0,9.8 24.8,2.4 25.6,1.6 26.1,10.9 27.1,12.4 28.7,12.8 30.8,12.1 32.4,12.8 34.0,12.4 35.8,13.0 35.8,17.5 4.2,17.5"/><polyline points="4.2,14.0 5.5,14.6 6.9,15.1 8.2,14.0 9.8,12.8 11.3,12.1 12.9,11.9 14.3,13.0 15.5,14.6 17.1,15.6 18.7,15.1 20.0,13.5 21.3,12.8 22.9,11.4 24.0,9.8 24.8,2.4 25.6,1.6 26.1,10.9 27.1,12.4 28.7,12.8 30.8,12.1 32.4,12.8 34.0,12.4 35.8,13.0"/></svg><span>115,811</span></td><td>2,675</td><td>2%</td><td>20%</td><td>8%</td><td>2.75</td><td>42168</td><td>77</td></tr>
<tr><td class="kw"><b>phine case</b><i class="ac">AC</i></td><td>Cell Phones &amp; Access...</td><td>23</td><td class="spc"><svg class="sp" width="40" height="20" viewBox="0 0 40 20"><polygon fill="url(#gg)" points="4.1,3.5 5.2,1.9 6.4,1.6 7.5,2.5 8.0,5.6 9.1,6.2 9.8,9.3 10.6,7.7 11.7,6.7 13.0,7.2 13.8,9.8 15.4,10.9 17.5,10.7 19.6,10.4 21.7,10.7 23.8,11.4 25.9,11.7 28.0,12.0 30.1,12.3 32.2,12.5 33.8,13.0 35.4,14.1 35.4,17.5 4.1,17.5"/><polyline points="4.1,3.5 5.2,1.9 6.4,1.6 7.5,2.5 8.0,5.6 9.1,6.2 9.8,9.3 10.6,7.7 11.7,6.7 13.0,7.2 13.8,9.8 15.4,10.9 17.5,10.7 19.6,10.4 21.7,10.7 23.8,11.4 25.9,11.7 28.0,12.0 30.1,12.3 32.2,12.5 33.8,13.0 35.4,14.1"/></svg><span>692,620</span></td><td class="spc"><svg class="sp" width="40" height="20" viewBox="0 0 40 20"><polygon fill="url(#gg)" points="4.2,15.6 5.5,16.4 7.1,15.1 8.7,14.6 9.8,10.9 10.8,13.5 11.9,12.5 13.4,11.4 15.0,10.4 16.6,9.3 17.9,8.8 18.9,6.2 20.3,4.6 21.7,5.1 22.9,3.0 24.5,2.5 26.1,1.9 27.4,2.5 28.4,5.1 29.8,5.6 31.4,5.4 32.9,5.1 34.3,1.9 35.6,2.5 35.6,17.5 4.2,17.5"/><polyline points="4.2,15.6 5.5,16.4 7.1,15.1 8.7,14.6 9.8,10.9 10.8,13.5 11.9,12.5 13.4,11.4 15.0,10.4 16.6,9.3 17.9,8.8 18.9,6.2 20.3,4.6 21.7,5.1 22.9,3.0 24.5,2.5 26.1,1.9 27.4,2.5 28.4,5.1 29.8,5.6 31.4,5.4 32.9,5.1 34.3,1.9 35.6,2.5"/></svg><span>2,070</span></td><td>71</td><td>3%</td><td>20%</td><td>12%</td><td>0.05</td><td>42038</td><td>7</td></tr>
<tr><td class="kw"><b>iohone case</b><i class="ac">AC</i></td><td>Cell Phones &amp; Access...</td><td>23</td><td class="spc"><svg class="sp" width="40" height="20" viewBox="0 0 40 20"><polygon fill="url(#gg)" points="9.4,4.5 10.2,4.3 10.2,17.5 9.4,17.5"/><polyline points="9.4,4.5 10.2,4.3"/><polygon fill="url(#gg)" points="16.1,7.7 17.2,6.1 18.6,4.5 19.9,2.4 21.4,1.4 22.8,2.2 23.8,4.5 25.2,5.6 26.2,7.2 27.3,9.8 28.4,10.7 29.4,7.7 30.5,5.1 31.5,4.3 32.6,6.6 33.8,8.8 35.1,9.8 35.9,10.7 35.9,17.5 16.1,17.5"/><polyline points="16.1,7.7 17.2,6.1 18.6,4.5 19.9,2.4 21.4,1.4 22.8,2.2 23.8,4.5 25.2,5.6 26.2,7.2 27.3,9.8 28.4,10.7 29.4,7.7 30.5,5.1 31.5,4.3 32.6,6.6 33.8,8.8 35.1,9.8 35.9,10.7"/></svg><span>1,161,303</span></td><td class="spc"><svg class="sp" width="40" height="20" viewBox="0 0 40 20"><polyline points="9.2,14.6 10.3,14.0"/><polygon fill="url(#gl)" points="15.8,12.4 17.1,13.5 18.2,11.4 19.2,13.0 20.3,10.9 21.3,9.8 22.7,8.8 23.8,7.2 25.0,7.7 26.3,6.6 27.1,3.0 28.0,1.6 28.7,5.6 29.4,10.9 30.3,13.5 31.6,14.0 32.6,11.9 33.7,9.8 35.0,7.7 36.1,6.6 36.1,17.5 15.8,17.5"/><polyline points="15.8,12.4 17.1,13.5 18.2,11.4 19.2,13.0 20.3,10.9 21.3,9.8 22.7,8.8 23.8,7.2 25.0,7.7 26.3,6.6 27.1,3.0 28.0,1.6 28.7,5.6 29.4,10.9 30.3,13.5 31.6,14.0 32.6,11.9 33.7,9.8 35.0,7.7 36.1,6.6"/></svg><span>1,167</span></td><td>38</td><td>3%</td><td>29%</td><td>33%</td><td>0.01</td><td>108556</td><td>18</td></tr>
<tr><td class="kw"><b>phone case for iphone</b><i class="ac">AC</i></td><td>Cell Phones &amp; Access...</td><td>22.1</td><td class="spc"><span class="sp"></span><span>2,519,624</span></td><td class="spc"><span class="sp"></span><span>140</span></td><td>5</td><td>3%</td><td>28%</td><td>0%</td><td>0</td><td>111263</td><td>3</td></tr>
<tr><td class="kw"><b>phone case iphone 13</b><i class="ac">AC</i></td><td>Cell Phones &amp; Access...</td><td>22.1</td><td class="spc"><svg class="sp" width="40" height="20" viewBox="0 0 40 20"><polyline points="4.1,15.6 5.6,15.1 7.0,15.3 8.3,17.2 9.8,17.7 11.5,17.4 12.8,15.6 14.3,15.1 15.9,14.2 17.5,15.1 19.1,15.6 20.7,15.1 21.7,9.8 22.4,1.6 23.1,1.6 23.6,9.8 24.1,16.1 25.4,16.3 27.5,15.9 29.6,15.6 31.7,15.1 33.8,15.3 35.7,15.6"/></svg><span>4,119</span></td><td class="spc"><svg class="sp" width="40" height="20" viewBox="0 0 40 20"><polygon fill="url(#gg)" points="4.2,7.7 5.5,8.2 6.9,7.5 7.6,3.5 8.7,1.6 10.3,1.6 11.5,2.4 12.4,6.1 13.4,7.2 14.7,7.7 15.8,9.3 17.1,8.2 18.5,6.6 19.8,5.1 20.8,5.6 21.7,9.8 22.1,14.6 23.1,14.6 23.6,8.8 24.2,5.4 25.6,4.5 27.1,4.3 28.7,4.5 30.3,5.6 31.9,5.4 34.0,5.6 35.8,5.4 35.8,17.5 4.2,17.5"/><polyline points="4.2,7.7 5.5,8.2 6.9,7.5 7.6,3.5 8.7,1.6 10.3,1.6 11.5,2.4 12.4,6.1 13.4,7.2 14.7,7.7 15.8,9.3 17.1,8.2 18.5,6.6 19.8,5.1 20.8,5.6 21.7,9.8 22.1,14.6 23.1,14.6 23.6,8.8 24.2,5.4 25.6,4.5 27.1,4.3 28.7,4.5 30.3,5.6 31.9,5.4 34.0,5.6 35.8,5.4"/></svg><span>177,854</span></td><td>2,134</td><td>1%</td><td>19%</td><td>8%</td><td>4.2</td><td>42338</td><td>67</td></tr>
<tr><td class="kw"><b>phone cse</b><i class="ac">AC</i></td><td>Automotive Parts &amp; A...</td><td>21.2</td><td class="spc"><span class="sp"></span><span></span></td><td class="spc"><span class="sp"></span><span></span></td><td></td><td></td><td>38%</td><td>20%</td><td>0</td><td>119067</td><td>3</td></tr>
<tr><td class="kw"><b>phone cass</b><i class="ac">AC</i></td><td>Cell Phones &amp; Access...</td><td>21.2</td><td class="spc"><svg class="sp" width="40" height="20" viewBox="0 0 40 20"><polygon fill="url(#gg)" points="8.0,2.7 8.5,4.8 9.4,6.4 9.4,17.5 8.0,17.5"/><polyline points="8.0,2.7 8.5,4.8 9.4,6.4"/><polygon fill="url(#gg)" points="17.2,4.3 18.0,5.4 18.9,5.9 18.9,17.5 17.2,17.5"/><polyline points="17.2,4.3 18.0,5.4 18.9,5.9"/><polygon fill="url(#gg)" points="21.4,3.8 22.4,5.9 23.3,7.5 24.3,2.7 25.6,1.4 26.4,4.8 27.5,9.6 28.8,10.1 29.6,5.9 30.9,4.3 31.9,6.4 33.3,7.5 34.7,8.5 35.9,7.5 35.9,17.5 21.4,17.5"/><polyline points="21.4,3.8 22.4,5.9 23.3,7.5 24.3,2.7 25.6,1.4 26.4,4.8 27.5,9.6 28.8,10.1 29.6,5.9 30.9,4.3 31.9,6.4 33.3,7.5 34.7,8.5 35.9,7.5"/></svg><span>1,841,991</span></td><td class="spc"><svg class="sp" width="40" height="20" viewBox="0 0 40 20"><polyline points="7.6,18.0 8.4,14.9 9.2,13.3"/><polyline points="17.1,15.4 18.2,13.8 18.9,13.3"/><polygon fill="url(#gl)" points="21.3,9.1 22.7,7.5 24.0,8.5 25.0,10.1 26.3,4.8 27.1,1.7 28.2,1.5 28.7,5.9 29.4,12.2 30.5,15.4 31.9,13.8 32.9,12.2 34.0,11.2 35.0,10.1 36.1,11.7 36.1,17.5 21.3,17.5"/><polyline points="21.3,9.1 22.7,7.5 24.0,8.5 25.0,10.1 26.3,4.8 27.1,1.7 28.2,1.5 28.7,5.9 29.4,12.2 30.5,15.4 31.9,13.8 32.9,12.2 34.0,11.2 35.0,10.1 36.1,11.7"/></svg><span>589</span></td><td>20</td><td>3%</td><td>29%</td><td>0%</td><td>0</td><td>119902</td><td>5</td></tr>
        </tbody>
      </table>
    </div>
  </div>

  <div id="sb"></div><svg style="position:absolute;left:1681px;top:5px" width="4" height="5" viewBox="0 0 4 5"><path d="M0 5L4 0V5z" fill="#555"/></svg><div id="sbt"></div>
  <div class="fl" style="left:1660.6px;top:626.5px;width:36px;height:36px;border-radius:18px"><svg width="16" height="18" viewBox="0 0 16 18" style="position:absolute;left:9px;top:9px" fill="none" stroke="#666" stroke-width="1.1"><rect x="1" y="2.6" width="4.6" height="4.6"/><rect x="1" y="10.4" width="4.600" height="4.600"/><rect x="8.800" y="10.400" width="4.600" height="4.600"/><path d="M11.1 1.400v6.600M7.800 4.700h6.600"/></svg></div>
  <div class="fl" style="left:1664.2px;top:677px;background:#ec8da6;box-shadow:0 0 0 1.5px rgba(255,255,255,.9),0 1px 6px rgba(0,0,0,.18)"><span style="position:absolute;left:5.5px;top:5px;font-size:8.500px;line-height:9px;color:#fff;font-weight:700">中</span><span style="position:absolute;left:13px;top:11.500px;font-size:11px;line-height:12px;color:#fff;font-weight:700">A</span><svg width="10" height="10" viewBox="0 0 10 10" style="position:absolute;left:6px;top:15px" fill="none" stroke="#fff" stroke-width="1.300" stroke-linecap="round"><path d="M1 1v2.500a2.500 2.500 0 0 0 2.500 2.500H5"/></svg><svg width="8" height="8" viewBox="0 0 8 8" style="position:absolute;left:15px;top:4.500px" fill="none" stroke="#fff" stroke-width="1.300" stroke-linecap="round"><path d="M1 1h2.500a2.500 2.500 0 0 1 2.500 2.500V5"/></svg></div>
</div>
</body>
</html>
